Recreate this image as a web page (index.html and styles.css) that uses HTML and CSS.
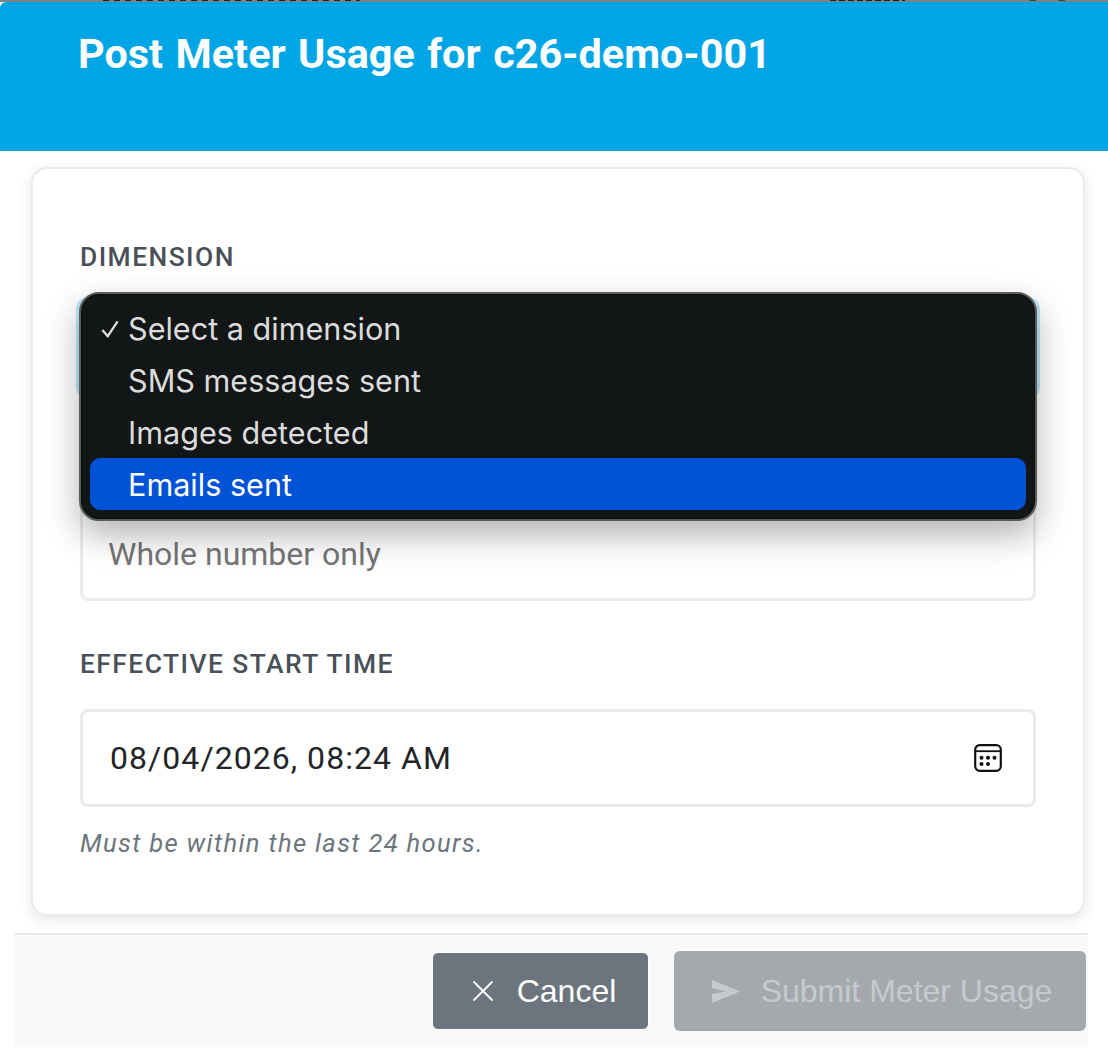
FILE: index.html
```html
<!doctype html>
<html lang="en">
<head>
    <meta charset="UTF-8">
    <title>Post Meter Usage</title>
    <link rel="stylesheet" href="styles.css">
</head>
<body>
    <div class="top-strip"></div>
    <header class="modal-header">
        <h1>Post Meter Usage for c26-demo-001</h1>
    </header>
    <main class="modal-body">
        <form class="card">
            <div class="field field-dimension">
                <label class="field__label">Dimension</label>
                <div class="field__control field__control-select"></div>
                <ul class="dropdown">
                    <li class="dropdown__item">
                        <svg class="dropdown__check" viewBox="0 0 20 20" fill="none">
                            <path d="M1.500 11l6 7L18.500 1.500" stroke="#dcdcdc" stroke-width="2.600"/>
                        </svg>
                        Select a dimension
                    </li>
                    <li class="dropdown__item">SMS messages sent</li>
                    <li class="dropdown__item">Images detected</li>
                    <li class="dropdown__item dropdown__item-active">Emails sent</li>
                </ul>
            </div>
            <div class="field field-quantity">
                <div class="field__control field__control-placeholder">Whole number only</div>
            </div>
            <div class="field">
                <label class="field__label">Effective start time</label>
                <div class="field__control field__control-date">
                    <span>08/04/2026, 08:24 AM</span>
                    <svg class="calendar-icon" viewBox="0 0 28 28" fill="none">
                        <rect x="1.2" y="1.2" width="25.6" height="25.6" rx="4.5" stroke="#111" stroke-width="2.2"/>
                        <path d="M1.5 7.2h25" stroke="#111" stroke-width="1.8"/>
                        <g fill="#111">
                            <circle cx="7.5" cy="13.8" r="2"/>
                            <circle cx="14" cy="13.8" r="2"/>
                            <circle cx="20.5" cy="13.8" r="2"/>
                            <circle cx="7.5" cy="20" r="2"/>
                            <circle cx="14" cy="20" r="2"/>
                        </g>
                    </svg>
                </div>
                <div class="field__hint">Must be within the last 24 hours.</div>
            </div>
        </form>
    </main>
    <footer class="modal-footer">
        <button class="btn btn-cancel" type="button">
            <svg class="btn__icon-x" viewBox="0 0 22 22" fill="none">
                <path d="M1.5 1.5l19 19M20.5 1.5l-19 19" stroke="#fff" stroke-width="1.8"/>
            </svg>
            Cancel
        </button>
        <button class="btn btn-submit" type="button">
            <svg class="btn__icon-send" viewBox="0 0 28 23">
                <path d="M0 0l28 11.5L0 23v-9l14-2.500L0 8z" fill="#c6cacd"/>
            </svg>
            Submit Meter Usage
        </button>
    </footer>
</body>
</html>
```

FILE: styles.css
```css
*,*:before,*:after{
    box-sizing: border-box;
}
body{
    margin: 0;
    padding: 0;
    background: #fff;
    font-family: 'Roboto', sans-serif;
    overflow: hidden;
}
.top-strip{
    height: 2px;
    background-color: #808080;
    background-image:
        repeating-linear-gradient(90deg, #222 0 6px, transparent 6px 11px),
        repeating-linear-gradient(90deg, #222 0 6px, transparent 6px 9px),
        linear-gradient(90deg, #1c5a34 0 6px, transparent 6px 28px, #1c5a34 28px 35px);
    background-size: 257px 1px, 75px 1px, 35px 1px;
    background-position: 103px 0, 830px 0, 1030px 0;
    background-repeat: no-repeat;
}
.modal-header{
    height: 149px;
    padding: 27px 78px 0;
    background: #00a5e6;
    border-radius: 6px 0 0 0;
}
.modal-header h1{
    margin: 0;
    font-size: 41.4px;
    line-height: 50px;
    font-weight: 700;
    word-spacing: 2.2px;
    color: #fff;
}
.modal-body{
    padding: 16px 23px 0 31px;
}
.card{
    height: 749px;
    padding: 73px 47px 0;
    background: #fff;
    border: 2px solid #e9ecef;
    border-radius: 16px;
    box-shadow: 0 4px 14px rgba(0,0,0,0.1);
}
.field{
    position: relative;
    margin-bottom: 48px;
}
.field-quantity{
    padding-top: 60px;
}
.field__label{
    display: block;
    font-size: 26.4px;
    line-height: 30px;
    font-weight: 500;
    letter-spacing: 1.45px;
    text-transform: uppercase;
    color: #495057;
    margin-bottom: 30px;
}
.field__control{
    display: flex;
    align-items: center;
    justify-content: space-between;
    height: 98px;
    padding: 0 31px 0 25px;
    background: #fff;
    border: 3px solid #e9ecef;
    border-radius: 8px;
    font-size: 32px;
}
.field__control-select{
    height: 94px;
    margin-top: -1px;
    border-color: #00a5e6;
    box-shadow: 0 0 0 4px rgba(0,165,230,0.25);
}
.field__control-placeholder{
    padding-top: 3px;
    color: #757575;
}
.field__control-date{
    padding-left: 27px;
    color: #212529;
    letter-spacing: 1.05px;
}
.calendar-icon{
    width: 28px;
    height: 28px;
}
.field__hint{
    margin-top: 21px;
    font-size: 25.6px;
    line-height: 30px;
    font-style: italic;
    letter-spacing: 1.33px;
    color: #6c757d;
}
.dropdown{
    position: absolute;
    z-index: 1;
    top: 50px;
    left: -1px;
    width: 958px;
    height: 229px;
    margin: 0;
    padding: 8px 9px 0;
    list-style: none;
    background: #121617;
    border: 2px solid #5a5c5d;
    border-radius: 20px;
    box-shadow: inset 0 0 0 1px #0c0d0d, 0 14px 34px rgba(0,0,0,0.3);
    font-family: 'Inter', sans-serif;
    font-size: 30.6px;
    color: #dcdcdc;
}
.dropdown__item{
    position: relative;
    height: 52px;
    line-height: 54px;
    padding-left: 38px;
    border-radius: 10px;
}
.dropdown__check{
    position: absolute;
    top: 18px;
    left: 11px;
    width: 18px;
    height: 18px;
}
.dropdown__item-active{
    background: #0052d6;
    color: #fff;
}
.modal-footer{
    display: flex;
    justify-content: flex-end;
    align-items: center;
    gap: 25px;
    width: 1074px;
    height: 114px;
    margin: 17px 0 0 14px;
    padding: 0 2px 0 0;
    background: #f7f9fb;
    border-top: 2px solid #e9ecef;
    font-family: 'Liberation Sans', Arial, sans-serif;
}
.btn{
    display: flex;
    align-items: center;
    justify-content: center;
    font-family: inherit;
    font-size: 32px;
    border-radius: 6px;
    cursor: pointer;
}
.btn-cancel{
    gap: 23px;
    width: 217px;
    height: 78px;
    padding-left: 13px;
    background: #6c757d;
    border: 1px solid #fff;
    color: #fff;
}
.btn-submit{
    gap: 21px;
    width: 412px;
    height: 80px;
    padding-left: 10px;
    background: #a5a9ad;
    border: none;
    color: #c6cacd;
}
.btn__icon-x{
    width: 22px;
    height: 22px;
}
.btn__icon-send{
    width: 28px;
    height: 23px;
}
```
